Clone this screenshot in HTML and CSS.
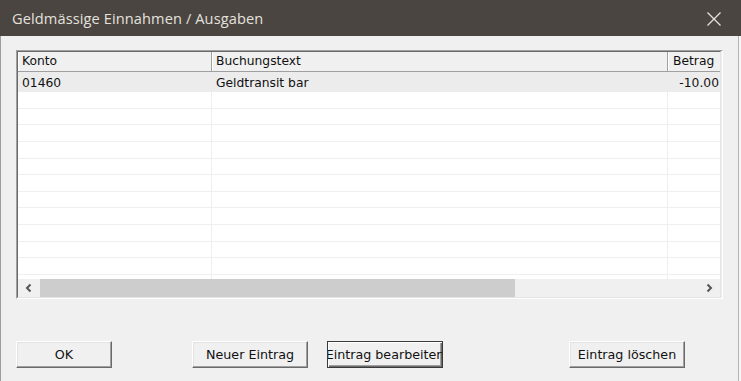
FILE: index.html
```html
<!DOCTYPE html>
<html>
<head>
<meta charset="utf-8">
<link rel="stylesheet" href="styles.css">
</head>
<body>
<div class="screen">
  <div class="titlebar">
    <span class="title">Geldmässige Einnahmen / Ausgaben</span>
    <svg class="close" width="16" height="16" viewBox="0 0 16 16"><path d="M1.5 1.5 L14.5 14.5 M14.5 1.5 L1.5 14.5" stroke="#e6e3df" stroke-width="1.3" fill="none"/></svg>
  </div>
  <div class="window">
    <div class="client">
      <div class="listbox">
        <div class="inner">
          <div class="grid">
            <div class="hrow">
              <div class="hcell c1">Konto</div>
              <div class="hcell c2">Buchungstext</div>
              <div class="hcell c3">Betrag</div>
            </div>
            <div class="row first">
              <div class="cell c1">01460</div>
              <div class="cell c2">Geldtransit bar</div>
              <div class="cell c3 num">-10.00</div>
            </div>
            <div class="row"><div class="cell c1"></div><div class="cell c2"></div><div class="cell c3"></div></div>
            <div class="row"><div class="cell c1"></div><div class="cell c2"></div><div class="cell c3"></div></div>
            <div class="row"><div class="cell c1"></div><div class="cell c2"></div><div class="cell c3"></div></div>
            <div class="row"><div class="cell c1"></div><div class="cell c2"></div><div class="cell c3"></div></div>
            <div class="row"><div class="cell c1"></div><div class="cell c2"></div><div class="cell c3"></div></div>
            <div class="row"><div class="cell c1"></div><div class="cell c2"></div><div class="cell c3"></div></div>
            <div class="row"><div class="cell c1"></div><div class="cell c2"></div><div class="cell c3"></div></div>
            <div class="row"><div class="cell c1"></div><div class="cell c2"></div><div class="cell c3"></div></div>
            <div class="row"><div class="cell c1"></div><div class="cell c2"></div><div class="cell c3"></div></div>
            <div class="row"><div class="cell c1"></div><div class="cell c2"></div><div class="cell c3"></div></div>
            <div class="row"><div class="cell c1"></div><div class="cell c2"></div><div class="cell c3"></div></div>
            <div class="row"><div class="cell c1"></div><div class="cell c2"></div><div class="cell c3"></div></div>
          </div>
          <div class="hscroll">
            <div class="arrow left"><svg width="10" height="10" viewBox="0 0 10 10"><path d="M6.5 1.5 L3 5 L6.5 8.5" stroke="#555555" stroke-width="2" fill="none"/></svg></div>
            <div class="track"><div class="thumb"></div></div>
            <div class="arrow right"><svg width="10" height="10" viewBox="0 0 10 10"><path d="M3.5 1.5 L7 5 L3.5 8.5" stroke="#555555" stroke-width="2" fill="none"/></svg></div>
          </div>
        </div>
      </div>
      <div class="buttons">
        <div class="btn ok"><span>OK</span></div>
        <div class="btn neu"><span>Neuer Eintrag</span></div>
        <div class="btn edit focus"><span>Eintrag bearbeiten</span></div>
        <div class="btn del"><span>Eintrag löschen</span></div>
      </div>
    </div>
  </div>
</div>
</body>
</html>
```

FILE: styles.css
```css
html, body {
  margin: 0;
  padding: 0;
  background: #f0f0f0;
}
.screen {
  width: 741px;
  height: 381px;
  overflow: hidden;
  display: flex;
  flex-direction: column;
  background: #f6f6f6;
}
.titlebar {
  height: 36px;
  flex: none;
  background: #4a4541;
  display: flex;
  align-items: center;
  justify-content: space-between;
  padding: 0 19px 0 12px;
}
.title {
  font-family: "Open Sans", "Noto Sans", sans-serif;
  font-size: 14.6px;
  color: #e4e1dd;
  letter-spacing: 0.1px;
}
.close {
  display: block;
  margin-top: 1px;
}
.window {
  flex: 1;
  width: 737px;
  border-left: 1px solid #9c9c9c;
  border-right: 1px solid #b4b4b4;
  background: #f0f0f0;
  display: flex;
  flex-direction: column;
}
.client {
  padding: 14px 0 0 15px;
  display: flex;
  flex-direction: column;
}
.listbox {
  width: 705px;
  height: 247px;
  border-top: 1px solid #a0a0a0;
  border-left: 1px solid #a0a0a0;
  border-right: 1px solid #ffffff;
  border-bottom: 1px solid #ffffff;
}
.inner {
  width: 702px;
  height: 245px;
  border-top: 1px solid #6a6a6a;
  border-left: 1px solid #6a6a6a;
  border-right: 1px solid #e3e3e3;
  border-bottom: 1px solid #e3e3e3;
  background: #ffffff;
  display: flex;
  flex-direction: column;
  overflow: hidden;
  font-family: "DejaVu Sans", sans-serif;
  font-size: 12.3px;
  color: #111;
}
.grid {
  height: 227px;
  overflow: hidden;
  flex: none;
}
.hrow {
  display: flex;
  height: 20px;
  background: #f0f0f0;
  border-bottom: 1px solid #a0a0a0;
  box-sizing: border-box;
}
.hcell {
  box-sizing: border-box;
  height: 19px;
  line-height: 19px;
  padding-left: 4px;
  border-right: 1px solid #a0a0a0;
  box-shadow: inset 1px 0 0 #ffffff;
  white-space: nowrap;
  overflow: hidden;
  flex: none;
}
.c1 { width: 194px; }
.c2 { width: 456px; }
.c3 { width: 60px; }
.hcell.c3 { border-right: none; padding-left: 5px; }
.row {
  display: flex;
  height: 16.64px;
  box-sizing: border-box;
  border-bottom: 1px solid #efefef;
}
.row.first {
  height: 20px;
  background: #ececec;
  border-bottom: none;
}
.cell {
  box-sizing: border-box;
  border-right: 1px solid #efefef;
  padding-left: 4px;
  white-space: nowrap;
  flex: none;
  line-height: 22px;
}
.row.first .cell { border-right-color: #ececec; }
.cell.c3 { border-right: none; }
.cell.num {
  width: 53px;
  text-align: right;
  padding-right: 2px;
}
.hscroll {
  height: 18px;
  flex: none;
  display: flex;
  background: #f0f0f0;
}
.arrow {
  width: 22px;
  display: flex;
  align-items: center;
  justify-content: center;
}
.track {
  flex: 1;
  display: flex;
}
.thumb {
  width: 475px;
  background: #cdcdcd;
}
.buttons {
  display: flex;
  margin-top: 42px;
  height: 27px;
  font-family: "DejaVu Sans", sans-serif;
  font-size: 12.7px;
  color: #111;
}
.btn {
  box-sizing: border-box;
  height: 27px;
  background: #f0f0f0;
  border-top: 1px solid #ffffff;
  border-left: 1px solid #ffffff;
  border-right: 1px solid #6a6a6a;
  border-bottom: 1px solid #6a6a6a;
  box-shadow: inset -1px -1px 0 #a0a0a0, inset 1px 1px 0 #e3e3e3;
  display: flex;
  align-items: center;
  justify-content: center;
  overflow: hidden;
  white-space: nowrap;
  flex: none;
}
.btn span { display: block; flex: none; }
.ok { width: 96px; }
.neu { width: 116px; margin-left: 80px; }
.edit { width: 116px; margin-left: 19px; }
.del { width: 116px; margin-left: 126px; }
.btn.focus {
  border: 1px solid #3a3a3a;
  box-shadow: inset 1px 1px 0 #ffffff, inset -1px -1px 0 #6a6a6a, inset -2px -2px 0 #a0a0a0;
}
```
